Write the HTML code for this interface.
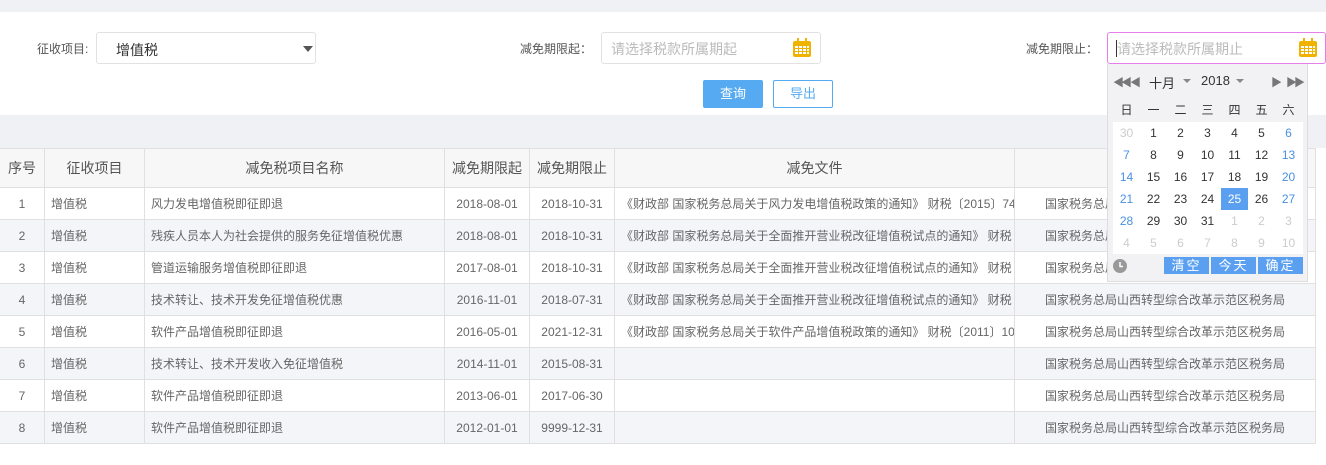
<!DOCTYPE html>
<html><head><meta charset="utf-8"><style>
*{margin:0;padding:0;box-sizing:border-box}
body{width:1326px;height:465px;position:relative;background:#fff;font-family:"Liberation Sans","Noto Sans CJK SC",sans-serif;color:#666;font-size:12px;overflow:hidden}
.a{position:absolute}
.lbl{font-size:12px;color:#555}
.inp{border:1px solid #e2e2e2;border-radius:3px;background:#fff}
.ph{color:#bbb;font-size:14px}
table{border-collapse:collapse;position:absolute;left:-1px;top:148px;table-layout:fixed;width:1316px}
td,th{border:1px solid #e0e0e0;height:32px;font-size:12px;color:#666;font-weight:normal;white-space:nowrap;overflow:hidden;padding:0 0 0 6px;text-overflow:clip}
th{height:39px;background:#f7f7f7;font-size:14px;color:#555;padding:0}
td.c{padding:0}
tr.g td{background:#f4f5f9}
.c{text-align:center}
.cal{left:1107px;top:64px;width:201px;height:218px;background:#f2f2f4;border:1px solid #ddd;border-top:none}
.grid{left:5px;top:58px;width:190px;height:132px;background:#fff}
.d{position:absolute;width:27px;text-align:center;font-size:12px;color:#333;height:22px;line-height:22px}
.btn{position:absolute;top:193px;width:45px;height:17px;background:#5ba0f0;color:#fff;font-size:13px;text-align:center;line-height:17px;letter-spacing:2px}
</style></head><body>
<div class="a" style="left:0;top:0;width:1326px;height:12px;background:#f0f1f5"></div>
<div class="a" style="left:0;top:115px;width:1326px;height:33px;background:#f0f1f5"></div>

<div class="a lbl" style="left:37px;top:40px">征收项目:</div>
<div class="a inp" style="left:96px;top:32px;width:220px;height:32px"><span class="a" style="left:19px;top:7px;font-size:14px;color:#333">增值税</span><span class="a" style="left:206px;top:13px;width:0;height:0;border-left:5px solid transparent;border-right:5px solid transparent;border-top:6px solid #555"></span></div>

<div class="a lbl" style="left:520px;top:40px">减免期限起：</div>
<div class="a inp" style="left:601px;top:32px;width:220px;height:32px"><span class="a ph" style="left:9px;top:6px">请选择税款所属期起</span>
<svg class="a" style="left:190px;top:5px" width="20" height="20" viewBox="0 0 20 20"><rect x="1" y="3" width="18" height="16" rx="2" fill="#f0b400"/><rect x="5" y="0" width="2" height="5" fill="#f0b400"/><rect x="13" y="0" width="2" height="5" fill="#f0b400"/><g fill="#fff"><rect x="3" y="8" width="3" height="2"/><rect x="7" y="8" width="3" height="2"/><rect x="11" y="8" width="3" height="2"/><rect x="15" y="8" width="2" height="2"/><rect x="3" y="11" width="3" height="2"/><rect x="7" y="11" width="3" height="2"/><rect x="11" y="11" width="3" height="2"/><rect x="15" y="11" width="2" height="2"/><rect x="3" y="14" width="3" height="2"/><rect x="7" y="14" width="3" height="2"/><rect x="11" y="14" width="3" height="2"/><rect x="15" y="14" width="2" height="2"/></g></svg></div>

<div class="a lbl" style="left:1026px;top:40px">减免期限止：</div>
<div class="a inp" style="left:1107px;top:32px;width:219px;height:32px;border-color:#e47fe9"><span class="a" style="left:8px;top:7px;width:1px;height:17px;background:#333"></span><span class="a ph" style="left:9px;top:6px">请选择税款所属期止</span>
<svg class="a" style="left:190px;top:5px" width="20" height="20" viewBox="0 0 20 20"><rect x="1" y="3" width="18" height="16" rx="2" fill="#f0b400"/><rect x="5" y="0" width="2" height="5" fill="#f0b400"/><rect x="13" y="0" width="2" height="5" fill="#f0b400"/><g fill="#fff"><rect x="3" y="8" width="3" height="2"/><rect x="7" y="8" width="3" height="2"/><rect x="11" y="8" width="3" height="2"/><rect x="15" y="8" width="2" height="2"/><rect x="3" y="11" width="3" height="2"/><rect x="7" y="11" width="3" height="2"/><rect x="11" y="11" width="3" height="2"/><rect x="15" y="11" width="2" height="2"/><rect x="3" y="14" width="3" height="2"/><rect x="7" y="14" width="3" height="2"/><rect x="11" y="14" width="3" height="2"/><rect x="15" y="14" width="2" height="2"/></g></svg></div>

<div class="a" style="left:703px;top:80px;width:60px;height:28px;background:#55aaf2;border-radius:2px;color:#fff;font-size:13px;text-align:center;line-height:28px">查询</div>
<div class="a" style="left:773px;top:80px;width:60px;height:28px;border:1px solid #55aaf2;border-radius:2px;color:#55aaf2;font-size:13px;text-align:center;line-height:26px">导出</div>

<table>
<colgroup><col style="width:45px"><col style="width:100px"><col style="width:300px"><col style="width:85px"><col style="width:85px"><col style="width:400px"><col style="width:301px"></colgroup>
<tr><th class="c">序号</th><th class="c">征收项目</th><th class="c">减免税项目名称</th><th class="c">减免期限起</th><th class="c">减免期限止</th><th class="c">减免文件</th><th></th></tr>
<tr><td class="c">1</td><td>增值税</td><td>风力发电增值税即征即退</td><td class="c">2018-08-01</td><td class="c">2018-10-31</td><td>《财政部 国家税务总局关于风力发电增值税政策的通知》 财税〔2015〕74号</td><td class="c">国家税务总局山西转型综合改革示范区税务局</td></tr>
<tr class="g"><td class="c">2</td><td>增值税</td><td>残疾人员本人为社会提供的服务免征增值税优惠</td><td class="c">2018-08-01</td><td class="c">2018-10-31</td><td>《财政部 国家税务总局关于全面推开营业税改征增值税试点的通知》 财税</td><td class="c">国家税务总局山西转型综合改革示范区税务局</td></tr>
<tr><td class="c">3</td><td>增值税</td><td>管道运输服务增值税即征即退</td><td class="c">2017-08-01</td><td class="c">2018-10-31</td><td>《财政部 国家税务总局关于全面推开营业税改征增值税试点的通知》 财税</td><td class="c">国家税务总局山西转型综合改革示范区税务局</td></tr>
<tr class="g"><td class="c">4</td><td>增值税</td><td>技术转让、技术开发免征增值税优惠</td><td class="c">2016-11-01</td><td class="c">2018-07-31</td><td>《财政部 国家税务总局关于全面推开营业税改征增值税试点的通知》 财税</td><td class="c">国家税务总局山西转型综合改革示范区税务局</td></tr>
<tr><td class="c">5</td><td>增值税</td><td>软件产品增值税即征即退</td><td class="c">2016-05-01</td><td class="c">2021-12-31</td><td>《财政部 国家税务总局关于软件产品增值税政策的通知》 财税〔2011〕100号</td><td class="c">国家税务总局山西转型综合改革示范区税务局</td></tr>
<tr class="g"><td class="c">6</td><td>增值税</td><td>技术转让、技术开发收入免征增值税</td><td class="c">2014-11-01</td><td class="c">2015-08-31</td><td></td><td class="c">国家税务总局山西转型综合改革示范区税务局</td></tr>
<tr><td class="c">7</td><td>增值税</td><td>软件产品增值税即征即退</td><td class="c">2013-06-01</td><td class="c">2017-06-30</td><td></td><td class="c">国家税务总局山西转型综合改革示范区税务局</td></tr>
<tr class="g"><td class="c">8</td><td>增值税</td><td>软件产品增值税即征即退</td><td class="c">2012-01-01</td><td class="c">9999-12-31</td><td></td><td class="c">国家税务总局山西转型综合改革示范区税务局</td></tr>
</table>

<div class="a cal">
<span class="a" style="left:5px;top:10px;font-size:11px;color:#777;letter-spacing:-3px">◀◀</span>
<span class="a" style="left:22px;top:10px;font-size:11px;color:#777">◀</span>
<span class="a" style="left:41px;top:9px;font-size:13px;color:#333">十月</span>
<span class="a" style="left:75px;top:15px;border-left:4px solid transparent;border-right:4px solid transparent;border-top:4px solid #888"></span>
<span class="a" style="left:93px;top:9px;font-size:13px;color:#333">2018</span>
<span class="a" style="left:128px;top:15px;border-left:4px solid transparent;border-right:4px solid transparent;border-top:4px solid #888"></span>
<span class="a" style="left:163px;top:10px;font-size:11px;color:#777">▶</span>
<span class="a" style="left:178px;top:10px;font-size:11px;color:#777;letter-spacing:-3px">▶▶</span>
<div class="a" style="left:5px;top:35px;width:190px;height:20px;font-size:13px;color:#666">
<span class="d" style="left:0">日</span><span class="d" style="left:27px">一</span><span class="d" style="left:54px">二</span><span class="d" style="left:81px">三</span><span class="d" style="left:108px">四</span><span class="d" style="left:135px">五</span><span class="d" style="left:162px">六</span></div>
<div class="a grid">
<span class="d" style="left:0;top:0;color:#ccc">30</span><span class="d" style="left:27px;top:0">1</span><span class="d" style="left:54px;top:0">2</span><span class="d" style="left:81px;top:0">3</span><span class="d" style="left:108px;top:0">4</span><span class="d" style="left:135px;top:0">5</span><span class="d" style="left:162px;top:0;color:#4a90e2">6</span>
<span class="d" style="left:0;top:22px;color:#4a90e2">7</span><span class="d" style="left:27px;top:22px">8</span><span class="d" style="left:54px;top:22px">9</span><span class="d" style="left:81px;top:22px">10</span><span class="d" style="left:108px;top:22px">11</span><span class="d" style="left:135px;top:22px">12</span><span class="d" style="left:162px;top:22px;color:#4a90e2">13</span>
<span class="d" style="left:0;top:44px;color:#4a90e2">14</span><span class="d" style="left:27px;top:44px">15</span><span class="d" style="left:54px;top:44px">16</span><span class="d" style="left:81px;top:44px">17</span><span class="d" style="left:108px;top:44px">18</span><span class="d" style="left:135px;top:44px">19</span><span class="d" style="left:162px;top:44px;color:#4a90e2">20</span>
<span class="d" style="left:0;top:66px;color:#4a90e2">21</span><span class="d" style="left:27px;top:66px">22</span><span class="d" style="left:54px;top:66px">23</span><span class="d" style="left:81px;top:66px">24</span><span class="d" style="left:108px;top:66px;background:#5ba0f0;color:#fff">25</span><span class="d" style="left:135px;top:66px">26</span><span class="d" style="left:162px;top:66px;color:#4a90e2">27</span>
<span class="d" style="left:0;top:88px;color:#4a90e2">28</span><span class="d" style="left:27px;top:88px">29</span><span class="d" style="left:54px;top:88px">30</span><span class="d" style="left:81px;top:88px">31</span><span class="d" style="left:108px;top:88px;color:#ccc">1</span><span class="d" style="left:135px;top:88px;color:#ccc">2</span><span class="d" style="left:162px;top:88px;color:#ccc">3</span>
<span class="d" style="left:0;top:110px;color:#ccc">4</span><span class="d" style="left:27px;top:110px;color:#ccc">5</span><span class="d" style="left:54px;top:110px;color:#ccc">6</span><span class="d" style="left:81px;top:110px;color:#ccc">7</span><span class="d" style="left:108px;top:110px;color:#ccc">8</span><span class="d" style="left:135px;top:110px;color:#ccc">9</span><span class="d" style="left:162px;top:110px;color:#ccc">10</span>
</div>
<svg class="a" style="left:5px;top:195px" width="14" height="14" viewBox="0 0 14 14"><circle cx="7" cy="7" r="7" fill="#999"/><path d="M7 3V7.5H10" stroke="#fff" stroke-width="1.5" fill="none"/></svg>
<div class="btn" style="left:56px">清空</div><div class="btn" style="left:103px">今天</div><div class="btn" style="left:150px">确定</div>
</div>
</body></html>
